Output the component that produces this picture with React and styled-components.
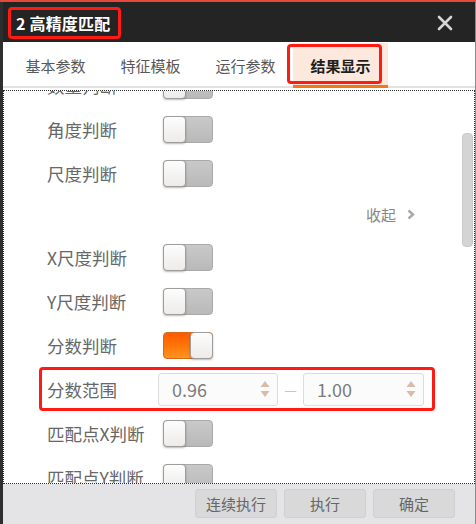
import React from "react";
import styled, { createGlobalStyle } from "styled-components";

const Global = createGlobalStyle`
  html, body { margin: 0; padding: 0; background: #fff; }
  body { font-family: "Noto Sans CJK SC", "Noto Sans", sans-serif; }
  * { box-sizing: border-box; }
`;

const Window = styled.div`
  width: 476px;
  height: 524px;
  display: flex;
  flex-direction: column;
  background: #fff;
  overflow: hidden;
`;

const TopStrip = styled.div`
  height: 2px;
  flex: none;
  background: #e4493c;
`;

const Frame = styled.div`
  flex: 1;
  min-height: 0;
  display: flex;
  flex-direction: column;
  border-left: 3px solid #2e2e2e;
  border-right: 1px solid #8a8a8a;
`;

const TitleBar = styled.div`
  height: 40px;
  flex: none;
  background: #242424;
  display: flex;
  align-items: center;
  justify-content: space-between;
  padding: 1px 22px 0 5px;
`;

const Title = styled.span`
  height: 32px;
  display: flex;
  align-items: center;
  padding: 0 8px 0 5px;
  border: 3px solid #ff1b14;
  border-radius: 4px;
  color: #fff;
  font-size: 16px;
  font-weight: 700;
  letter-spacing: 0.2px;
`;

const CloseBtn = styled.span`
  display: flex;
  width: 16px;
  height: 16px;
`;

const TabBar = styled.div`
  height: 46px;
  flex: none;
  display: flex;
  align-items: stretch;
  padding-left: 5px;
  border-bottom: 2px solid #e2e2e2;
`;

const Tab = styled.div`
  position: relative;
  width: 95px;
  display: flex;
  align-items: center;
  justify-content: center;
  padding-top: 3px;
  font-size: 15px;
  color: ${(p) => (p.$active ? "#1e1e1e" : "#585858")};
  font-weight: ${(p) => (p.$active ? 700 : 400)};
  background: ${(p) => (p.$active ? "#fce8dc" : "transparent")};
  border-bottom: ${(p) => (p.$active ? "3px solid #f07818" : "none")};
  margin-bottom: ${(p) => (p.$active ? "-2px" : "0")};
  margin-top: ${(p) => (p.$active ? "1px" : "0")};

  ${(p) =>
    p.$active &&
    `
    &::after {
      content: "";
      position: absolute;
      left: -6px;
      top: 1px;
      right: 6px;
      bottom: 1px;
      border: 3px solid #ff1b14;
      border-radius: 4px;
    }
  `}
`;

const Gap = styled.div`
  height: 2px;
  flex: none;
`;

const Content = styled.div`
  position: relative;
  flex: 1;
  min-height: 0;
  overflow: hidden;
  border: 1px dotted #2a2a2a;
`;

const List = styled.div`
  margin-top: -28px;
  padding-left: 43px;
  display: flex;
  flex-direction: column;
`;

const Row = styled.div`
  height: 44px;
  display: flex;
  align-items: center;
`;

const Label = styled.span`
  width: 116px;
  flex: none;
  font-size: 17.5px;
  color: #676767;
  white-space: nowrap;
`;

const Track = styled.span`
  width: 50px;
  height: 27px;
  display: flex;
  justify-content: ${(p) => (p.$on ? "flex-end" : "flex-start")};
  border-radius: 4px;
  border: 1px solid ${(p) => (p.$on ? "#d8681c" : "#a9a9a9")};
  background: ${(p) =>
    p.$on
      ? "linear-gradient(180deg, #ff5a00 0%, #ff7a0a 60%, #ff9422 100%)"
      : "linear-gradient(180deg, #c9c9c9 0%, #b9b9b9 100%)"};
`;

const Knob = styled.span`
  width: 23px;
  margin: -1px;
  border-radius: 4px;
  border: 1px solid #9d9d9d;
  background: linear-gradient(180deg, #fdfdfd 0%, #eeebe9 100%);
  box-shadow: 0 1px 2px rgba(0, 0, 0, 0.28);
`;

const CollapseRow = styled.div`
  height: 40px;
  display: flex;
  align-items: center;
  justify-content: flex-end;
  gap: 11px;
  padding-right: 59px;
  padding-bottom: 2px;
  font-size: 15px;
  color: #868686;
`;

const RangeRow = styled.div`
  height: 44px;
  margin-left: -8px;
  width: 396px;
  display: flex;
  align-items: center;
  padding: 0 8px 0 5px;
  border: 3px solid #ff1b14;
  border-radius: 4px;
`;

const RangeLabel = styled(Label)`
  width: 111px;
`;

const NumInput = styled.div`
  width: ${(p) => p.$w}px;
  height: 33px;
  display: flex;
  align-items: center;
  justify-content: space-between;
  padding: 0 7px 0 13px;
  border: 1px solid #dcdcdc;
  border-radius: 3px;
  background: #fbfbfb;
  font-size: 18px;
  color: #7b7b7b;
`;

const Dash = styled.span`
  width: 25px;
  display: flex;
  justify-content: center;
  color: #c8c8c8;
  font-size: 14px;
`;

const Scrollbar = styled.div`
  position: absolute;
  top: 42px;
  right: 1px;
  width: 11px;
  height: 114px;
  border-radius: 4px;
  background: #d4d4d4;
  border: 1px solid #c9c9c9;
`;

const Footer = styled.div`
  height: 40px;
  flex: none;
  background: #e4e4e6;
  display: flex;
  align-items: center;
  justify-content: flex-end;
  gap: 7px;
  padding: 0 20px 1px 0;
`;

const Button = styled.button`
  width: 82px;
  height: 29px;
  border: 1px solid #d0d0d0;
  border-radius: 3px;
  background: #d9d9d9;
  font-family: "Noto Sans CJK SC", "Noto Sans", sans-serif;
  font-size: 15px;
  color: #666;
  padding: 0;
`;

const Toggle = ({ on }) => (
  <Track $on={on}>
    <Knob />
  </Track>
);

const Spinner = () => (
  <svg width="10" height="20" viewBox="0 0 10 20">
    <path d="M5 2 L9.5 8 L0.5 8 Z" fill="#d9bba7" />
    <path d="M0.5 12 L9.5 12 L5 18 Z" fill="#d9bba7" />
  </svg>
);

const rowsTop = [
  ["数量判断", false],
  ["角度判断", false],
  ["尺度判断", false],
];
const rowsMid = [
  ["X尺度判断", false],
  ["Y尺度判断", false],
  ["分数判断", true],
];
const rowsBottom = [
  ["匹配点X判断", false],
  ["匹配点Y判断", false],
];

export default function App() {
  return (
    <>
      <Global />
      <Window>
        <TopStrip />
        <Frame>
          <TitleBar>
            <Title>2 高精度匹配</Title>
            <CloseBtn>
              <svg width="16" height="16" viewBox="0 0 16 16">
                <path
                  d="M2 2 L14 14 M14 2 L2 14"
                  stroke="#d6d6d6"
                  strokeWidth="2.6"
                  strokeLinecap="round"
                />
              </svg>
            </CloseBtn>
          </TitleBar>
          <TabBar>
            <Tab>基本参数</Tab>
            <Tab>特征模板</Tab>
            <Tab>运行参数</Tab>
            <Tab $active>结果显示</Tab>
          </TabBar>
          <Gap />
          <Content>
            <List>
              {rowsTop.map(([l, on]) => (
                <Row key={l}>
                  <Label>{l}</Label>
                  <Toggle on={on} />
                </Row>
              ))}
              <CollapseRow>
                <span>收起</span>
                <svg width="8" height="11" viewBox="0 0 8 11">
                  <path
                    d="M1.5 1.5 L6 5.5 L1.5 9.5"
                    stroke="#a8a8a8"
                    strokeWidth="2.4"
                    fill="none"
                  />
                </svg>
              </CollapseRow>
              {rowsMid.map(([l, on]) => (
                <Row key={l}>
                  <Label>{l}</Label>
                  <Toggle on={on} />
                </Row>
              ))}
              <RangeRow>
                <RangeLabel>分数范围</RangeLabel>
                <NumInput $w={120}>
                  <span>0.96</span>
                  <Spinner />
                </NumInput>
                <Dash>—</Dash>
                <NumInput $w={121}>
                  <span>1.00</span>
                  <Spinner />
                </NumInput>
              </RangeRow>
              {rowsBottom.map(([l, on]) => (
                <Row key={l}>
                  <Label>{l}</Label>
                  <Toggle on={on} />
                </Row>
              ))}
            </List>
            <Scrollbar />
          </Content>
          <Footer>
            <Button>连续执行</Button>
            <Button>执行</Button>
            <Button>确定</Button>
          </Footer>
        </Frame>
      </Window>
    </>
  );
}
